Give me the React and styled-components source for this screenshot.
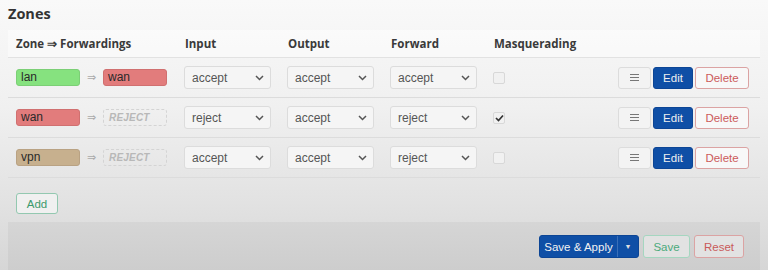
import React from "react";
import styled, { createGlobalStyle } from "styled-components";

const Global = createGlobalStyle`
  html, body { margin: 0; padding: 0; }
  body {
    width: 768px;
    height: 270px;
    overflow: hidden;
    background: linear-gradient(180deg, #f9f9f9 0%, #f0f0f0 40%, #e2e2e2 75%, #d6d6d6 100%);
    font-family: "Liberation Sans", Arial, sans-serif;
    color: #444;
  }
`;

const Page = styled.div`
  display: flex;
  flex-direction: column;
  padding: 0 8px;
  height: 270px;
  box-sizing: border-box;
`;

const Title = styled.h2`
  margin: 0;
  padding: 5px 0 0 0;
  height: 24px;
  box-sizing: border-box;
  font-family: "Open Sans", "Liberation Sans", sans-serif;
  font-size: 14.5px;
  font-weight: 700;
  color: #333;
  line-height: 18px;
`;

const Table = styled.div`
  display: flex;
  flex-direction: column;
  margin-top: 6px;
`;

const Row = styled.div`
  display: grid;
  grid-template-columns: 168px 103px 103px 103px 1fr auto;
  align-items: center;
  padding: 0 11px 0 8px;
  height: ${(p) => (p.$head ? "28px" : "40px")};
  border-bottom: 1px solid ${(p) => (p.$head ? "#e2e2e2" : "#dcdcdc")};
  background: ${(p) => (p.$head ? "rgba(255,255,255,0.45)" : "transparent")};
  box-sizing: border-box;
`;

const Th = styled.div`
  font-family: "Open Sans", "Liberation Sans", sans-serif;
  font-weight: 700;
  font-size: 11.5px;
  color: #3a3a3a;
  padding-left: ${(p) => (p.$first ? "0" : "1px")};
`;

const ZoneCell = styled.div`
  display: flex;
  align-items: center;
`;

const Badge = styled.div`
  width: 64px;
  height: 17px;
  box-sizing: border-box;
  border-radius: 3px;
  background: ${(p) => p.$color};
  border: 1px solid ${(p) => p.$border};
  color: #2a2a2a;
  font-size: 12px;
  line-height: 15px;
  padding-left: 4px;
`;

const Reject = styled.div`
  width: 64px;
  height: 17px;
  box-sizing: border-box;
  border-radius: 3px;
  border: 1px dashed #d4d4d4;
  color: #b8b8b8;
  font-size: 10px;
  font-style: italic;
  font-weight: 700;
  letter-spacing: 0.2px;
  line-height: 15px;
  padding-left: 5px;
`;

const Arrow = styled.span`
  width: 23px;
  text-align: center;
  color: #aaa;
  font-size: 11px;
  font-family: "DejaVu Sans", sans-serif;
`;

const Select = styled.div`
  width: 87px;
  height: 23px;
  box-sizing: border-box;
  border: 1px solid #dcdcdc;
  border-radius: 3px;
  background: #f5f5f5;
  display: flex;
  align-items: center;
  justify-content: space-between;
  padding: 0 6px 0 7px;
  font-size: 12px;
  color: #555;
`;

const Check = styled.div`
  width: 12px;
  height: 12px;
  box-sizing: border-box;
  border: 1px solid #d8d8d8;
  border-radius: 2px;
  background: #f1f1f1;
  display: flex;
  align-items: center;
  justify-content: center;
`;

const Actions = styled.div`
  display: flex;
  gap: 2px;
  align-items: center;
`;

const Btn = styled.button`
  height: ${(p) => p.$h || 22}px;
  width: ${(p) => p.$w}px;
  box-sizing: border-box;
  border-radius: 3px;
  font-family: "Liberation Sans", Arial, sans-serif;
  font-size: 11.5px;
  padding: 0;
  cursor: pointer;
  border: 1px solid ${(p) => p.$border};
  background: ${(p) => p.$bg};
  color: ${(p) => p.$fg};
  display: flex;
  align-items: center;
  justify-content: center;
`;

const AddWrap = styled.div`
  padding: 15px 0 0 8px;
  height: 44px;
  box-sizing: border-box;
`;

const Footer = styled.div`
  flex: 1;
  background: rgba(0, 0, 0, 0.04);
  display: flex;
  justify-content: flex-end;
  align-items: flex-start;
  padding: 13px 16px 0 0;
  gap: 4px;
`;

const Split = styled.div`
  display: flex;
  height: 23px;
  border-radius: 3px;
  overflow: hidden;
  background: #0f4fa6;
  border: 1px solid #0c4595;
  box-sizing: border-box;
`;

const SplitMain = styled.div`
  width: 77px;
  display: flex;
  align-items: center;
  justify-content: center;
  color: #f2f2f2;
  font-size: 11.5px;
  white-space: nowrap;
  border-right: 1px solid #3a6fb8;
`;

const SplitDrop = styled.div`
  width: 20px;
  display: flex;
  align-items: center;
  justify-content: center;
  color: #e0e0e0;
  font-size: 7px;
`;

const Chevron = () => (
  <svg width="9" height="6" viewBox="0 0 9 6">
    <path d="M1 1l3.5 3.5L8 1" fill="none" stroke="#555" strokeWidth="1.5" />
  </svg>
);

const Tick = () => (
  <svg width="9" height="8" viewBox="0 0 9 8">
    <path d="M1 4l2.5 2.5L8 1.5" fill="none" stroke="#333" strokeWidth="1.7" />
  </svg>
);

const Hamburger = () => (
  <svg width="9" height="9" viewBox="0 0 9 9">
    <path d="M0 1.5h9M0 4.5h9M0 7.5h9" stroke="#777" strokeWidth="1.2" />
  </svg>
);

const rows = [
  { zone: "lan", color: "#86e27f", border: "#7ccf76", dest: { name: "wan", color: "#e27c7c", border: "#d07070" }, input: "accept", output: "accept", forward: "accept", masq: false },
  { zone: "wan", color: "#e27c7c", border: "#d07070", dest: null, input: "reject", output: "accept", forward: "reject", masq: true },
  { zone: "vpn", color: "#c7b08e", border: "#b9a283", dest: null, input: "accept", output: "accept", forward: "reject", masq: false },
];

export default function App() {
  return (
    <>
      <Global />
      <Page>
        <Title>Zones</Title>
        <Table>
          <Row $head>
            <Th $first>Zone ⇒ Forwardings</Th>
            <Th>Input</Th>
            <Th>Output</Th>
            <Th>Forward</Th>
            <Th>Masquerading</Th>
            <div />
          </Row>
          {rows.map((r) => (
            <Row key={r.zone}>
              <ZoneCell>
                <Badge $color={r.color} $border={r.border}>{r.zone}</Badge>
                <Arrow>⇒</Arrow>
                {r.dest ? (
                  <Badge $color={r.dest.color} $border={r.dest.border}>{r.dest.name}</Badge>
                ) : (
                  <Reject>REJECT</Reject>
                )}
              </ZoneCell>
              <Select>{r.input}<Chevron /></Select>
              <Select>{r.output}<Chevron /></Select>
              <Select>{r.forward}<Chevron /></Select>
              <Check>{r.masq && <Tick />}</Check>
              <Actions>
                <Btn $w={33} $border="#dcdcdc" $bg="#f3f3f3" $fg="#666"><Hamburger /></Btn>
                <Btn $w={40} $border="#0c4595" $bg="#0f4fa6" $fg="#f0f0f0">Edit</Btn>
                <Btn $w={54} $border="#dba3a3" $bg="#f8f8f8" $fg="#cc5b5b">Delete</Btn>
              </Actions>
            </Row>
          ))}
        </Table>
        <AddWrap>
          <Btn $w={42} $h={21} $border="#93c8b0" $bg="#f0f0f0" $fg="#3c9a6c">Add</Btn>
        </AddWrap>
        <Footer>
          <Split>
            <SplitMain>Save &amp; Apply</SplitMain>
            <SplitDrop>▼</SplitDrop>
          </Split>
          <Btn $w={47} $h={23} $border="#a5d6c0" $bg="#e2e2e2" $fg="#4caa7c">Save</Btn>
          <Btn $w={50} $h={23} $border="#dba3a3" $bg="#e2e2e2" $fg="#c95a5a">Reset</Btn>
        </Footer>
      </Page>
    </>
  );
}
